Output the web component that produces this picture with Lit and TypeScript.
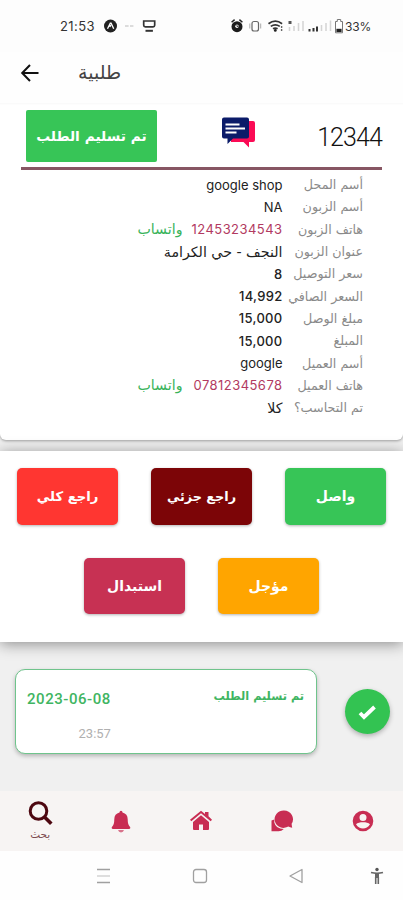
import { LitElement, html, css } from "lit";
import { customElement } from "lit/decorators.js";
import { classMap } from "lit/directives/class-map.js";

interface Detail {
  label: string;
  value: string;
  kind?: "phone" | "num" | "arabic";
}

const details: Detail[] = [
  { label: "أسم المحل", value: "google shop" },
  { label: "أسم الزبون", value: "NA" },
  { label: "هاتف الزبون", value: "12453234543", kind: "phone" },
  { label: "عنوان الزبون", value: "النجف - حي الكرامة", kind: "arabic" },
  { label: "سعر التوصيل", value: "8", kind: "num" },
  { label: "السعر الصافي", value: "14,992", kind: "num" },
  { label: "مبلغ الوصل", value: "15,000", kind: "num" },
  { label: "المبلغ", value: "15,000", kind: "num" },
  { label: "أسم العميل", value: "google" },
  { label: "هاتف العميل", value: "07812345678", kind: "phone" },
  { label: "تم التحاسب؟", value: "كلا", kind: "arabic" },
];

@customElement("status-bar")
class StatusBar extends LitElement {
  static styles = css`
    :host { display: flex; height: 52px; padding: 0 33px 0 60px; box-sizing: border-box;
      align-items: center; justify-content: space-between; color: #333;
      font: 13px "Inter", "Open Sans", sans-serif; }
    .side { display: flex; align-items: center; }
    .clock { width: 35px; letter-spacing: 0.4px; margin-right: 9px; }
    .pct { font-size: 12px; letter-spacing: -0.2px; width: 25px; }
    svg { display: block; }
  `;
  render() {
    return html`
      <div class="side">
        <span class="clock">21:53</span>
        <svg width="54" height="16" viewBox="0 0 54 16">
          <circle cx="6.5" cy="8" r="6.5" fill="#222" />
          <path d="M3.5 10.8 6.3 5.2h.8l2.6 5.6M5.8 8.8l1-1.6" fill="none" stroke="#fff" stroke-width="1.3" />
          <path d="M21 8h3.6M26 8h3.4" stroke="#bbb" stroke-width="1.2" />
          <path d="M39.7 3h11v4.2q0 1.6-1.6 1.6h-7.8q-1.6 0-1.6-1.6z" fill="none" stroke="#333" stroke-width="1.7" />
          <path d="M41.5 12.8h7.4" fill="none" stroke="#333" stroke-width="2" />
        </svg>
      </div>
      <div class="side">
        <svg width="114" height="18" viewBox="0 0 114 18">
          <circle cx="6" cy="9.7" r="5.5" fill="#1c1c1c" />
          <path d="M.6 5.2 3.6 2.6M11.4 5.2 8.4 2.6" stroke="#222" stroke-width="1.5" />
          <circle cx="6" cy="9.2" r="1.7" fill="#fff" />
          <path d="M6 7.8v1.7h1.6" fill="none" stroke="#222" stroke-width=".8" />
          <rect x="21" y="4.5" width="6.5" height="9.5" rx="2" fill="none" stroke="#666" stroke-width="1.2" />
          <path d="M18.8 6.5v5M29.7 6.5v5" stroke="#aaa" />
          <path d="M37.5 6.8q6.8-5.2 13.6 0M39.8 9.4q4.5-3.2 9 0M42 11.8q2.3-1.5 4.6 0" fill="none" stroke="#333" stroke-width="1.7" />
          <circle cx="44.3" cy="13.4" r="1.4" fill="#222" />
          <path d="M50.6 9v6" stroke="#666" stroke-width="1.4" stroke-dasharray="2 1" />
          <path d="M59 4v3" stroke="#555" stroke-width="3" />
          <path d="M58.5 10v4M63 9v5M67.5 6v8M72 4v10" stroke="#d4d4d4" stroke-width="1.5" />
          <path d="M78.5 12v2.5M82.5 11v3.5M86 9.5v5" stroke="#333" stroke-width="2" />
          <path d="M90.5 8v6M95 6v8M99.5 3.500v10.500" stroke="#d4d4d4" stroke-width="1.5" />
          <path d="M104.500 4.500h1.800v-2h3.400v2h1.800v11.300h-7z" fill="#fff" stroke="#777" />
          <path d="M105.400 11.800h5.200v3.200h-5.200z" fill="#222" />
        </svg>
        <span class="pct">33%</span>
      </div>
    `;
  }
}

@customElement("order-card")
class OrderCard extends LitElement {
  static styles = css`
    :host { display: block; height: 335px; box-sizing: border-box; background: #fff;
      padding: 5px 20px 0; border-radius: 0 0 6px 6px; direction: rtl;
      box-shadow: 0 1px 3px rgba(0, 0, 0, 0.35); font-family: "DejaVu Sans", sans-serif; }
    .top { display: flex; height: 57px; align-items: flex-start; justify-content: space-between;
      border-bottom: 3px solid #875663; margin: 0 1px; box-sizing: content-box; padding-left: 5px; }
    .id { font: 300 25px/56px "Roboto", sans-serif; letter-spacing: -0.9px; color: #111; width: 66px; direction: ltr; text-align: right; }
    .chat { margin: 6px 0 0 2px; }
    .state { width: 131px; height: 52px; border-radius: 2px; background: #37c557; color: #fff;
      font-size: 13.8px; font-weight: 700; display: flex; align-items: center; justify-content: center; }
    .rows { padding: 3.5px 20px 0 0; }
    .row { display: flex; height: 22.3px; align-items: center; white-space: nowrap; }
    .label { width: 80.5px; color: #8a8a8a; font-size: 12.7px; }
    .value { color: #222; font-family: "Inter", "DejaVu Sans", sans-serif; font-size: 13px; }
    .value.num { font-weight: 500; letter-spacing: 0.3px; }
    .value.arabic { font-family: "DejaVu Sans", sans-serif; font-size: 14.2px; }
    .value.phone { color: #b23a61; width: 100px; letter-spacing: 0.45px; }
    .wa { color: #39b35a; font-size: 14.2px; }
  `;
  render() {
    return html`
      <div class="top">
        <div class="id">12344</div>
        <svg class="chat" width="36" height="33" viewBox="0 0 36 33">
          <path d="M11 5h22q2 0 2 2v17q0 2-2 2h-4v5.500L23.500 26H11z" fill="#fb0b55" />
          <path d="M4 1.500h23q2 0 2 2v17q0 2-2 2H13L7.500 28v-5.500H4q-2 0-2-2v-17q0-2 2-2z" fill="#0b1b69" />
          <path d="M5.500 8.500h14M5.500 12.500h19.500M5.500 16.500h11" stroke="#fff" stroke-width="2" />
        </svg>
        <div class="state">تم تسليم الطلب</div>
      </div>
      <div class="rows">
        ${details.map(
          (d) => html`<div class="row">
            <span class="label">${d.label}</span>
            <span class=${classMap({ value: true, num: d.kind === "num", phone: d.kind === "phone", arabic: d.kind === "arabic" })}>${d.value}</span>
            ${d.kind === "phone" ? html`<span class="wa">واتساب</span>` : ""}
          </div>`
        )}
      </div>
    `;
  }
}

@customElement("action-panel")
class ActionPanel extends LitElement {
  static styles = css`
    :host { display: flex; flex-direction: column; gap: 33px; height: 191px; box-sizing: border-box;
      padding-top: 17px; margin-top: 11px; background: #fff; direction: rtl;
      box-shadow: 0 2px 14px rgba(0, 0, 0, 0.42); font-family: "DejaVu Sans", sans-serif; }
    .line { display: flex; justify-content: center; gap: 33px; }
    .btn { width: 101px; height: 56.5px; border-radius: 5px; color: #fff; font-size: 14px; font-weight: 700;
      display: flex; align-items: center; justify-content: center; box-shadow: 0 1px 3px rgba(0, 0, 0, 0.3); }
    .green { background: #37c557; }
    .maroon { background: #7c0507; font-size: 12.8px; }
    .red { background: #ff3631; font-size: 13.2px; }
    .orange { background: #ffa500; }
    .rose { background: #c73153; }
  `;
  render() {
    return html`
      <div class="line">
        <div class="btn green">واصل</div>
        <div class="btn maroon">راجع جزئي</div>
        <div class="btn red">راجع كلي</div>
      </div>
      <div class="line">
        <div class="btn orange">مؤجل</div>
        <div class="btn rose">استبدال</div>
      </div>
    `;
  }
}

@customElement("order-timeline")
class OrderTimeline extends LitElement {
  static styles = css`
    :host { display: flex; height: 149px; box-sizing: border-box; padding: 27px 13.5px 0 15px;
      align-items: flex-start; justify-content: space-between; }
    .event { display: flex; justify-content: space-between; width: 302px; height: 85px; box-sizing: border-box;
      border: 1.5px solid #6fc48c; border-radius: 10px; background: #fff; padding: 19px 12px 0 11px;
      box-shadow: 0 2px 4px rgba(0, 0, 0, 0.25); color: #3fb562; }
    .when { display: flex; flex-direction: column; align-items: flex-end; gap: 16px; }
    .date { font: 500 15px/20px "Roboto", sans-serif; letter-spacing: 0.55px; }
    .time { font: 13px/18px "Roboto", sans-serif; color: #b0b0b0; }
    .name { font: 700 11.3px/16px "DejaVu Sans", sans-serif; direction: rtl; }
    .mark { width: 45px; height: 45px; border-radius: 50%; background: #33c352; margin-top: 20px;
      display: flex; align-items: center; justify-content: center; box-shadow: 0 2px 5px rgba(0, 0, 0, 0.28); }
  `;
  render() {
    return html`
      <div class="event">
        <div class="when"><span class="date">2023-06-08</span><span class="time">23:57</span></div>
        <div class="name">تم تسليم الطلب</div>
      </div>
      <div class="mark">
        <svg width="20" height="18" viewBox="0 0 20 18">
          <path d="m3 10 4 4L17.500 4" fill="none" stroke="#fff" stroke-width="3.8" />
        </svg>
      </div>
    `;
  }
}

@customElement("tab-bar")
class TabBar extends LitElement {
  static styles = css`
    :host { display: grid; grid-template-columns: repeat(5, 1fr); height: 60px; background: #f7f4f3; }
    .tab { display: flex; flex-direction: column; align-items: center; justify-content: center; color: #c82d53; }
    .active { color: #4d0710; justify-content: flex-start; padding-top: 10px; box-sizing: border-box; }
    .name { font: 10.5px/14px "DejaVu Sans", sans-serif; color: #7c4a50; margin-top: 1px; }
    svg { display: block; fill: currentColor; }
  `;
  render() {
    return html`
      <div class="tab active">
        <svg width="25" height="25" viewBox="0 0 25 25">
          <circle cx="10.500" cy="10" r="8.300" fill="none" stroke="currentColor" stroke-width="3" />
          <path d="m16.500 16 6.800 6.800" stroke="currentColor" stroke-width="3.600" />
        </svg>
        <span class="name">بحث</span>
      </div>
      <div class="tab">
        <svg width="20" height="23" viewBox="0 0 20 23">
          <path d="M10 .8q1.500 0 1.500 1.700c3.400.8 5.200 3.200 5.200 6.800 0 4.200.8 6 2.200 7.400.9 1 .3 2.300-.9 2.300H2c-1.200 0-1.800-1.300-.9-2.300 1.400-1.400 2.200-3.200 2.200-7.400 0-3.600 1.800-6 5.200-6.800Q8.500.8 10 .8z" />
          <path d="M7 20h6q-.6 2.400-3 2.400T7 20z" opacity=".65" />
        </svg>
      </div>
      <div class="tab">
        <svg width="24" height="22" viewBox="0 0 24 22">
          <path d="M16 2h3.500v4.300L23 9.800l-1.300 1.500L12 3.200 2.300 11.300 1 9.800 12 .800 16 4z" />
          <path d="m12 5.200 8 6.700V19q0 1-1 1h-5v-5.500h-4V20H5q-1 0-1-1v-7.100z" />
        </svg>
      </div>
      <div class="tab">
        <svg width="24" height="24" viewBox="0 0 24 24">
          <path d="M4.300 10.500v3q1.500 6.500 9.500 6.500-2.500 2.500-6 2.200H1.500V11.500z" />
          <path d="M14 1.500a9 8.700 0 0 1 7.600 13.300q.2 2 .6 4-2.200-.1-3.900-1.200A9 8.700 0 1 1 14 1.500z" />
        </svg>
      </div>
      <div class="tab">
        <svg width="22" height="22" viewBox="0 0 22 22">
          <path fill-rule="evenodd" d="M11 .700a10.300 10.300 0 1 1 0 20.600A10.300 10.300 0 0 1 11 .700zm0 3.300a3.500 3.500 0 1 0 0 7 3.500 3.500 0 0 0 0-7zM4 14.200c1.800 3 4.300 4.300 7 4.300s5.200-1.300 7-4.300c-1.600-1.400-4-2-7-2s-5.400.6-7 2z" />
        </svg>
      </div>
    `;
  }
}

@customElement("system-nav")
class SystemNav extends LitElement {
  static styles = css`
    :host { display: grid; grid-template-columns: 96px 96px 81px 16px; height: 49px; background: #fefefe;
      align-items: center; padding: 0 0 0 96px; box-sizing: border-box; }
    svg { display: block; fill: none; stroke: #a0a0a0; stroke-width: 1.3; }
    .person { stroke: #666; }
  `;
  render() {
    return html`
      <svg width="15" height="16" viewBox="0 0 15 16"><path d="M1 1.500h13M1 14.500h13" /><path d="M1 8h13" opacity=".5" /></svg>
      <svg width="16" height="16" viewBox="0 0 16 16"><rect x="1.500" y="1.500" width="13" height="13" rx="2.500" /></svg>
      <svg width="16" height="16" viewBox="0 0 16 16"><path d="M14 1.500v13L2 8z" stroke-linejoin="round" /></svg>
      <svg class="person" width="16" height="20" viewBox="0 0 16 20">
        <circle cx="8" cy="3.500" r="1.700" fill="#555" stroke="none" />
        <path d="M2 6.500q6 1.600 12 0" stroke-width="1.800" />
        <path d="M8 7v5" stroke-width="4" /><path d="M6.700 11v7M9.300 11v7" stroke-width="1.600" />
      </svg>
    `;
  }
}

@customElement("app-root")
class AppRoot extends LitElement {
  static styles = css`
    :host { display: block; width: 403px; height: 900px; overflow: hidden; background: #fdfdfd; }
    .head { display: flex; height: 52px; align-items: center; padding: 0 0 0 20px; box-sizing: border-box;
      background: #fefefe; border-bottom: 1px solid #fafafa; margin-bottom: 1px; }
    .title { font: 19px/30px "DejaVu Sans", sans-serif; color: #444; margin: 0 0 12px 38px; }
    .body { height: 686px; background: #f0f0f0; overflow: hidden; }
    svg { display: block; margin-bottom: 10px; }
  `;
  render() {
    return html`
      <status-bar></status-bar>
      <div class="head">
        <svg width="20" height="20" viewBox="0 0 20 20" fill="none" stroke="#111" stroke-width="2">
          <path d="M18.500 10H2.500M10 2 2.200 10l7.800 8" />
        </svg>
        <span class="title">طلبية</span>
      </div>
      <div class="body">
        <order-card></order-card>
        <action-panel></action-panel>
        <order-timeline></order-timeline>
      </div>
      <tab-bar></tab-bar>
      <system-nav></system-nav>
    `;
  }
}
